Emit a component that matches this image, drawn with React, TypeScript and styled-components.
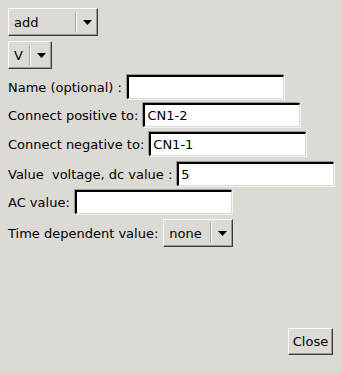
import React from "react";
import styled, { createGlobalStyle } from "styled-components";

const Global = createGlobalStyle`
  html, body { margin: 0; padding: 0; background: #dcdad5; }
  body { font-family: "DejaVu Sans", sans-serif; font-size: 13px; color: #000; }
`;

const Window = styled.div`
  width: 342px;
  height: 373px;
  box-sizing: border-box;
  padding: 8px 9px 18px 8px;
  display: flex;
  flex-direction: column;
  align-items: flex-start;
  background: #dcdad5;
`;

const MenuButton = styled.div<{ $w: number; $h?: number }>`
  box-sizing: border-box;
  width: ${(p) => p.$w}px;
  height: ${(p) => p.$h ?? 28}px;
  display: flex;
  align-items: center;
  background: #dcdad5;
  border-style: solid;
  border-width: 1px;
  border-color: #ffffff #3a3a3a #3a3a3a #ffffff;
  box-shadow: inset -1px -1px 0 #9e9a91;
  padding-left: 5px;
`;

const MenuText = styled.span`
  flex: 1;
  line-height: 15px;
`;

const MenuSep = styled.span`
  width: 1px;
  height: 20px;
  background: #ffffff;
  border-left: 1px solid #a8a49c;
`;

const ArrowBox = styled.span`
  width: 20px;
  display: flex;
  justify-content: center;
  align-items: center;
`;

const Arrow = () => (
  <svg width="9" height="5" viewBox="0 0 9 5">
    <polygon points="0,0 9,0 4.5,5" fill="#000" />
  </svg>
);

const Spacer = styled.div<{ $h: number }>`
  height: ${(p) => p.$h}px;
  flex-shrink: 0;
`;

const Row = styled.div<{ $h?: number }>`
  display: flex;
  align-items: center;
  height: ${(p) => p.$h ?? 24}px;
  gap: 5px;
`;

const Label = styled.span`
  white-space: pre;
  line-height: 15px;
`;

const Entry = styled.div`
  box-sizing: border-box;
  width: 157px;
  height: 24px;
  background: #ffffff;
  border-style: solid;
  border-width: 2px 1px 1px 2px;
  border-color: #000000 #dcdad5 #dcdad5 #000000;
  box-shadow: 1px 1px 0 #f4f3f0, -1px -1px 0 #9e9a91;
  display: flex;
  align-items: center;
  padding-left: 2px;
  line-height: 15px;
`;

const Footer = styled.div`
  margin-top: auto;
  align-self: flex-end;
`;

const Button = styled.div`
  box-sizing: border-box;
  width: 45px;
  height: 27px;
  display: flex;
  align-items: center;
  justify-content: center;
  background: #dcdad5;
  border-style: solid;
  border-width: 1px;
  border-color: #ffffff #3a3a3a #3a3a3a #ffffff;
  box-shadow: inset -1px -1px 0 #9e9a91;
`;

function Menu({ label, w, h }: { label: string; w: number; h?: number }) {
  return (
    <MenuButton $w={w} $h={h}>
      <MenuText>{label}</MenuText>
      <MenuSep />
      <ArrowBox>
        <Arrow />
      </ArrowBox>
    </MenuButton>
  );
}

export default function App() {
  return (
    <>
      <Global />
      <Window>
        <Menu label="add" w={90} />
        <Spacer $h={5} />
        <Menu label="V" w={44} />
        <Spacer $h={6} />
        <Row>
          <Label>Name (optional) :</Label>
          <Entry />
        </Row>
        <Spacer $h={4} />
        <Row>
          <Label>Connect positive to:</Label>
          <Entry>CN1-2</Entry>
        </Row>
        <Spacer $h={5} />
        <Row>
          <Label>Connect negative to:</Label>
          <Entry>CN1-1</Entry>
        </Row>
        <Spacer $h={6} />
        <Row>
          <Label>Value  voltage, dc value :</Label>
          <Entry>5</Entry>
        </Row>
        <Spacer $h={4} />
        <Row>
          <Label>AC value:</Label>
          <Entry />
        </Row>
        <Spacer $h={5} />
        <Row $h={28}>
          <Label>Time dependent value:</Label>
          <Menu label="none" w={70} />
        </Row>
        <Footer>
          <Button>Close</Button>
        </Footer>
      </Window>
    </>
  );
}
